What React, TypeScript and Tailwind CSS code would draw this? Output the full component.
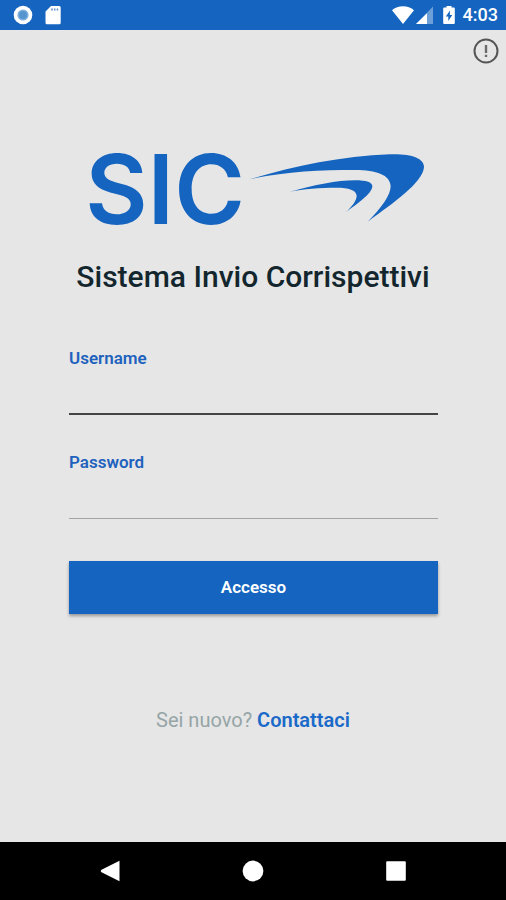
import React, { useState } from "react";

const StatusBar: React.FC = () => (
  <header className="flex h-[30px] items-center justify-between bg-[#1565c0] pr-2 pl-[13px] text-white">
    <div className="flex items-center gap-3">
      <svg width="20" height="20" viewBox="0 0 20 20" aria-hidden="true">
        <circle cx="10" cy="10" r="9.3" fill="#fff" />
        <circle cx="10" cy="10" r="5.6" fill="#7fb0de" />
        <circle cx="10" cy="10" r="4" fill="#5795cf" />
      </svg>
      <svg width="16" height="20" viewBox="0 0 16 20" aria-hidden="true">
        <path
          d="M6 1h8.2A1.5 1.5 0 0 1 15.7 2.500v15.300a1.500 1.500 0 0 1-1.500 1.500H2a1.500 1.500 0 0 1-1.500-1.500V6.500z"
          fill="#fff"
        />
        <path d="M6.200 3.500h1.600v2H6.200zM9 3.500h1.500v2H9zM11.700 3.500h1.500v2h-1.500z" fill="#5b8fd0" />
      </svg>
    </div>
    <div className="flex items-center">
      <svg width="24" height="20" viewBox="0 0 24 20" aria-hidden="true">
        <path d="M11 19 0 5.300C3 2.600 6.800 1.200 11 1.200s8 1.400 11 4.100z" fill="#fff" />
      </svg>
      <svg width="19" height="20" viewBox="0 0 19 20" aria-hidden="true">
        <path d="M17 1.500V19H0z" fill="#6d9fd9" />
        <path d="M11 8.300V19H0z" fill="#fff" />
      </svg>
      <svg width="12" height="20" viewBox="0 0 12 20" className="ml-2" aria-hidden="true">
        <path
          d="M3.500 1h5v1.500h2.300a1 1 0 0 1 1 1V18a1 1 0 0 1-1 1H1.200a1 1 0 0 1-1-1V3.500a1 1 0 0 1 1-1h2.300z"
          fill="#fff"
        />
        <path d="M7 5.500 2.800 11.500h2.500V16L9.300 10H6.800z" fill="#1565c0" />
      </svg>
      <span className="ml-2 text-lg font-medium">4:03</span>
    </div>
  </header>
);

const Logo: React.FC = () => (
  <div className="flex h-[72px] items-start justify-center gap-1 pl-1 text-[#1565c0]">
    <span className="font-['Inter',sans-serif] text-[96px] leading-[72px] font-semibold">
      SIC
    </span>
    <svg width="176" height="69" viewBox="27 42 528 207" className="mt-px" aria-hidden="true">
      <path
        d="M28 118C150 82 300 48 450 43C515 41 553 55 552 82C548 128 462 188 383 245C425 203 452 165 452 138C450 105 410 90 345 90C240 90 130 95 28 118Z"
        fill="currentColor"
      />
      <path
        d="M150 155C225 135 290 121 345 121C380 121 397 127 397 139C396 162 350 192 316 218C337 199 350 181 350 167C348 150 327 143 290 143C240 143 190 147 150 155Z"
        fill="currentColor"
      />
    </svg>
  </div>
);

type FieldProps = {
  id: string;
  label: string;
  type: string;
  lineClass: string;
  value: string;
  onChange: (value: string) => void;
};

const Field: React.FC<FieldProps> = ({ id, label, type, lineClass, value, onChange }) => (
  <div className="flex flex-col">
    <label htmlFor={id} className="text-[17px] leading-6 font-semibold text-[#1f62bd]">
      {label}
    </label>
    <input
      id={id}
      type={type}
      value={value}
      onChange={(e) => onChange(e.target.value)}
      className={`h-[45px] w-full bg-transparent text-lg text-[#263238] outline-none ${lineClass}`}
    />
  </div>
);

const NavigationBar: React.FC = () => (
  <nav className="flex h-[58px] items-center justify-around bg-black px-[39px]">
    <button type="button" aria-label="Indietro">
      <svg width="22" height="22" viewBox="0 0 22 22">
        <path d="M20.500 0.800v20.400L2.500 12.200q-1.800-1.200 0-2.400z" fill="#fff" />
      </svg>
    </button>
    <button type="button" aria-label="Home">
      <svg width="22" height="22" viewBox="0 0 22 22">
        <circle cx="11" cy="11" r="10.400" fill="#fff" />
      </svg>
    </button>
    <button type="button" aria-label="Recenti">
      <svg width="22" height="22" viewBox="0 0 22 22">
        <rect x="1.200" y="1.300" width="19.600" height="19.400" rx="1" fill="#fff" />
      </svg>
    </button>
  </nav>
);

export default function App() {
  const [username, setUsername] = useState("");
  const [password, setPassword] = useState("");

  return (
    <div className="flex min-h-screen flex-col bg-[#e6e6e6] font-['Roboto',sans-serif]">
      <StatusBar />

      <main className="flex flex-1 flex-col">
        <div className="flex justify-end pt-2 pr-[7px]">
          <button type="button" aria-label="Informazioni">
            <svg width="26" height="26" viewBox="0 0 26 26" fill="none">
              <circle cx="13" cy="13" r="11.500" stroke="#555" strokeWidth="2" />
              <path d="M13 7v8M13 16.800v2.200" stroke="#6b6b6b" strokeWidth="2.400" />
            </svg>
          </button>
        </div>

        <div className="mt-[89px]">
          <Logo />
        </div>

        <h1 className="mt-[34px] text-center text-3xl leading-9 font-medium text-[#13262e]">
          Sistema Invio Corrispettivi
        </h1>

        <form
          className="mt-[51px] flex flex-col pr-[68px] pl-[69px]"
          onSubmit={(e) => e.preventDefault()}
        >
          <div className="flex flex-col gap-[35px]">
            <Field
              id="username"
              label="Username"
              type="text"
              lineClass="border-b-2 border-[#444]"
              value={username}
              onChange={setUsername}
            />
            <Field
              id="password"
              label="Password"
              type="password"
              lineClass="border-b border-[#a3a3a3]"
              value={password}
              onChange={setPassword}
            />
          </div>
          <button
            type="submit"
            className="mt-[42px] h-[53px] bg-[#1565c0] text-[17px] font-semibold text-white shadow-[0_2px_3px_rgba(0,0,0,0.35)]"
          >
            Accesso
          </button>
        </form>

        <p className="mt-[92px] mb-8 text-center text-xl leading-7 text-[#95a5a6]">
          Sei nuovo?{" "}
          <a href="#contattaci" className="font-semibold text-[#1b6ac9]">
            Contattaci
          </a>
        </p>
      </main>

      <NavigationBar />
    </div>
  );
}
